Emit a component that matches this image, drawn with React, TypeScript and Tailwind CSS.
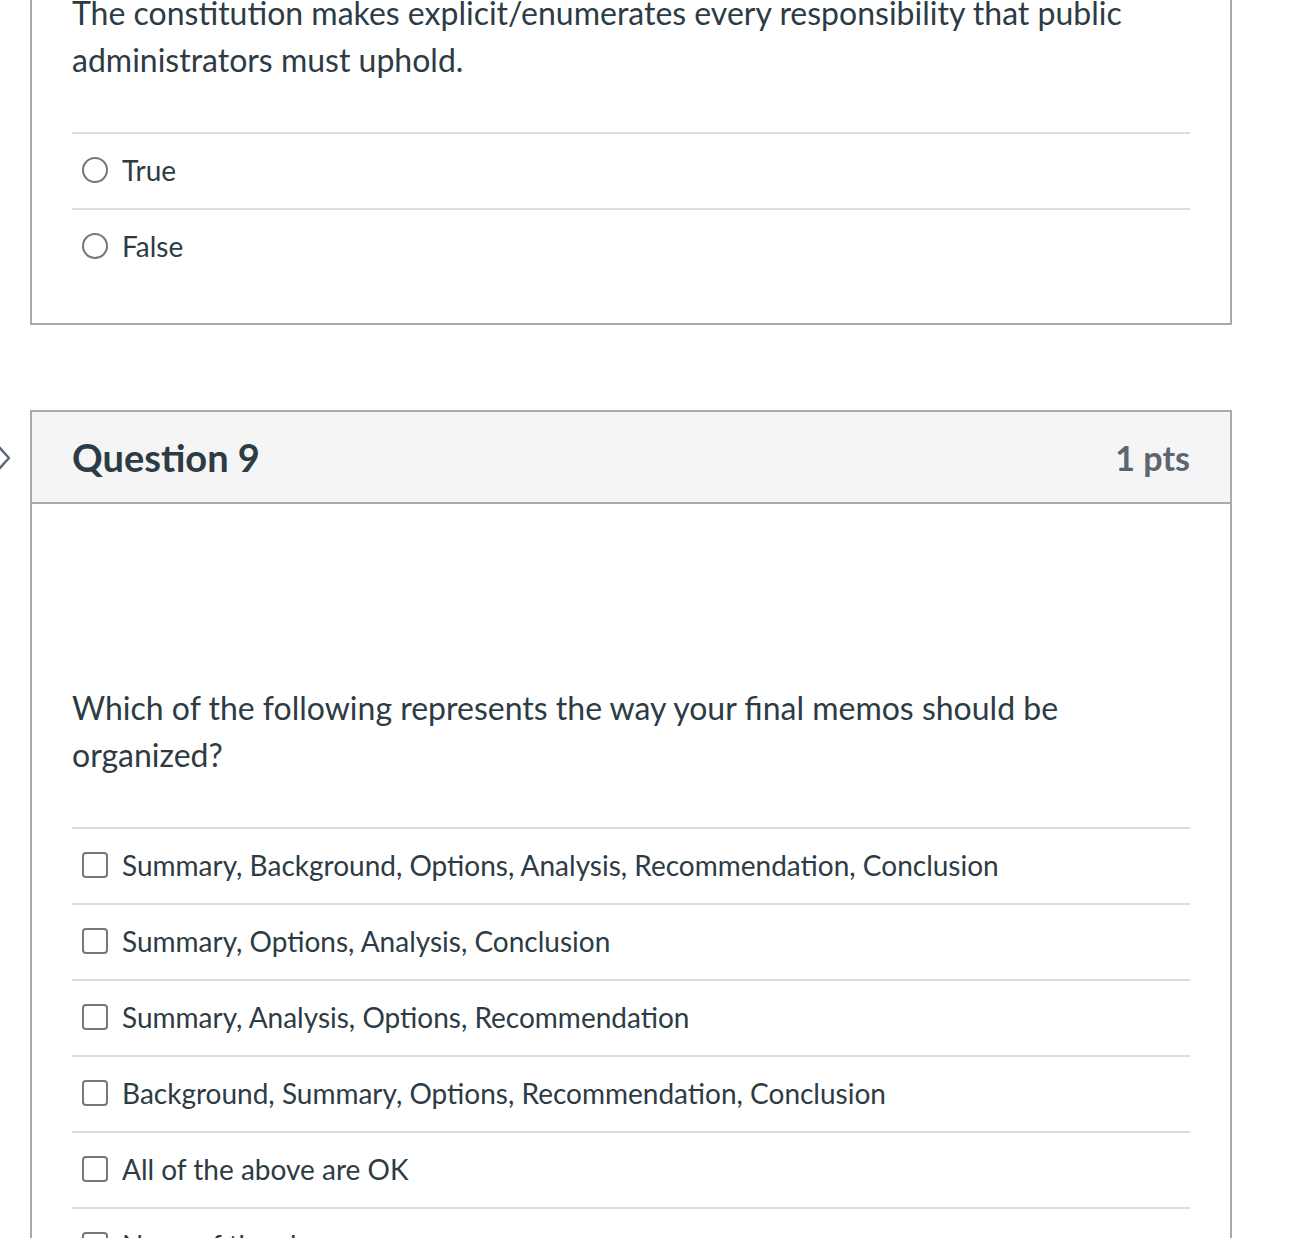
import { useState } from 'react';

const q9Options = [
  'Summary, Background, Options, Analysis, Recommendation, Conclusion',
  'Summary, Options, Analysis, Conclusion',
  'Summary, Analysis, Options, Recommendation',
  'Background, Summary, Options, Recommendation, Conclusion',
  'All of the above are OK',
  'None of the above',
];

const Radio = () => (
  <span className="w-[26px] h-[26px] rounded-full border-2 border-[#777] bg-white shrink-0" />
);

const Check = () => (
  <span className="w-[26px] h-[26px] rounded-[4px] border-2 border-[#777] bg-white shrink-0" />
);

export default function App() {
  const [picked, setPicked] = useState<string | null>(null);

  return (
    <div className="h-[1238px] overflow-hidden bg-white font-['Lato','Noto_Sans',sans-serif] text-[#2d3b45]">
      {/* question 8, top cut off */}
      <div className="flex">
        <div className="w-[30px] shrink-0" />
        <div className="w-[1202px] border-x-2 border-b-2 border-[#aaaaaa] px-10 pb-[39px]">
          <p className="-mt-[11px] text-[32px] leading-[47px]">
            The constitution makes explicit/enumerates every responsibility that public administrators must uphold.
          </p>
          <div className="mt-[49px]">
            {['True', 'False'].map((o) => (
              <label
                key={o}
                onClick={() => setPicked(o)}
                className="flex items-center gap-[14px] h-[76px] border-t-2 border-[#dcdcdc] pl-[10px] pb-[3px] text-[28px]"
              >
                <Radio />
                <span>{o}</span>
              </label>
            ))}
          </div>
        </div>
      </div>

      {/* question 9 */}
      <div className="flex mt-[85px]">
        <div className="w-[30px] shrink-0 pt-[35px]">
          <svg width="14" height="26" viewBox="0 0 14 26" className="-ml-[3px]">
            <path d="M2 2 L12 13 L2 24" fill="none" stroke="#5a6a78" strokeWidth="2.4" strokeLinecap="round" strokeLinejoin="round" />
          </svg>
        </div>
        <div className="w-[1202px] border-2 border-b-0 border-[#aaaaaa]">
          <div className="flex items-center justify-between h-[92px] px-10 bg-[#f5f5f5] border-b-2 border-[#aaaaaa]">
            <h2 className="text-[38px] font-bold">Question 9</h2>
            <span className="text-[34px] font-bold text-[#5b6670]">1 pts</span>
          </div>
          <div className="px-10 pt-[181px]">
            <p className="-mt-[1px] text-[32px] leading-[47px]">
              Which of the following represents the way your final memos should be organized?
            </p>
            <div className="mt-[49px]">
              {q9Options.map((o) => (
                <label
                  key={o}
                  className="flex items-center gap-[14px] h-[76px] border-t-2 border-[#dcdcdc] pl-[10px] pb-[3px] text-[28px]"
                >
                  <Check />
                  <span>{o}</span>
                </label>
              ))}
            </div>
          </div>
        </div>
      </div>
      {picked && null}
    </div>
  );
}
